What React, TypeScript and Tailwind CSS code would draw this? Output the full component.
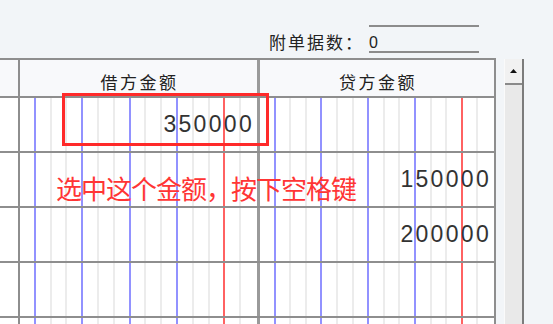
import React from "react";

const lineCls = (i: number): string => {
  if (i === 15) return "";
  if (i === 1 || i === 4 || i === 7 || i === 10) return "border-r-2 border-[#9292ff]";
  if (i === 13) return "border-r-2 border-[#ff6262]";
  return "border-r-2 border-[#ececec]";
};

function DigitGrid() {
  return (
    <div className="absolute inset-0 grid grid-cols-[repeat(15,minmax(0,1fr))]">
      {Array.from({ length: 15 }, (_, k) => (
        <div key={k} className={lineCls(k + 1)} />
      ))}
    </div>
  );
}

function MoneyCell({ w, value }: { w: string; value: string }) {
  return (
    <div className={`relative ${w} flex items-center justify-end pr-[3px] bg-white`}>
      <DigitGrid />
      {value && (
        <span className="relative font-['Liberation_Sans',Arial,sans-serif] text-[23px] leading-none tracking-[2.3px] text-[#333]">
          {value}
        </span>
      )}
    </div>
  );
}

const ROWS = [
  { d: "350000", c: "" },
  { d: "", c: "150000" },
  { d: "", c: "200000" },
  { d: "", c: "" },
  { d: "", c: "" },
];

export default function App() {
  return (
    <div className="relative w-[553px] h-[324px] overflow-hidden bg-[#f2f5f8] font-['Noto_Sans_CJK_SC',sans-serif] text-[#222]">
      {/* top bar */}
      <div className="h-[58px] flex items-start pl-[269px] pt-[25px]">
        <span className="w-[100px] mt-[7px] text-[17px] leading-[20px] tracking-[2px] whitespace-nowrap">
          附单据数：
        </span>
        <div className="w-[110px] h-[28px] border-y-2 border-[#8c8c8c] flex items-end">
          <span className="font-['Liberation_Sans',Arial,sans-serif] text-[16px] leading-[16px] text-[#222]">0</span>
        </div>
      </div>

      {/* main */}
      <div className="flex items-start">
        <div className="w-[496px] flex flex-col border-t-2 border-r-2 border-[#8e8e8e]">
          {/* header */}
          <div className="flex h-[38px] border-b-2 border-[#8e8e8e] bg-[#f8f9fb]">
            <div className="w-[20px] border-r-2 border-[#8e8e8e]" />
            <div className="w-[237px] flex items-center justify-center pt-[6px] pl-[2px] text-[17px] leading-none tracking-[2.5px]">
              借方金额
            </div>
            <div className="w-[3px] bg-[#9a9a9a]" />
            <div className="w-[234px] flex items-center justify-center pt-[6px] pl-[2px] text-[17px] leading-none tracking-[2.5px]">
              贷方金额
            </div>
          </div>
          {ROWS.map((r, i) => (
            <div key={i} className="flex h-[55px] border-b-2 border-[#8e8e8e]">
              <div className="w-[20px] border-r-2 border-[#8e8e8e] bg-white" />
              <MoneyCell w="w-[237px]" value={r.d} />
              <div className="w-[3px] bg-[#9a9a9a]" />
              <MoneyCell w="w-[234px]" value={r.c} />
            </div>
          ))}
        </div>

        {/* scrollbar */}
        <div className="ml-[8px] mt-[1px] w-[20px] h-[270px] flex flex-col border-l border-r-2 border-l-[#fafafa] border-r-[#7c7c7c]">
          <div className="h-[26px] bg-[#f1f1f1] border-b-2 border-[#8a8a8a] flex items-center justify-center">
            <svg width="7" height="4" viewBox="0 0 7 4">
              <path d="M3.5 0 L7 4 H0 Z" fill="#111" />
            </svg>
          </div>
          <div className="flex-1 bg-[#e9e9e9]" />
        </div>
      </div>

      {/* highlight box */}
      <div className="absolute left-[62px] top-[93px] w-[207px] h-[53px] border-[3px] border-[#ff2a2a]" />

      {/* annotation */}
      <div className="absolute left-[56px] top-[175px] text-[26px] leading-none tracking-[-1px] text-[#ff3535] whitespace-nowrap">
        选中这个金额，按下空格键
      </div>
    </div>
  );
}
